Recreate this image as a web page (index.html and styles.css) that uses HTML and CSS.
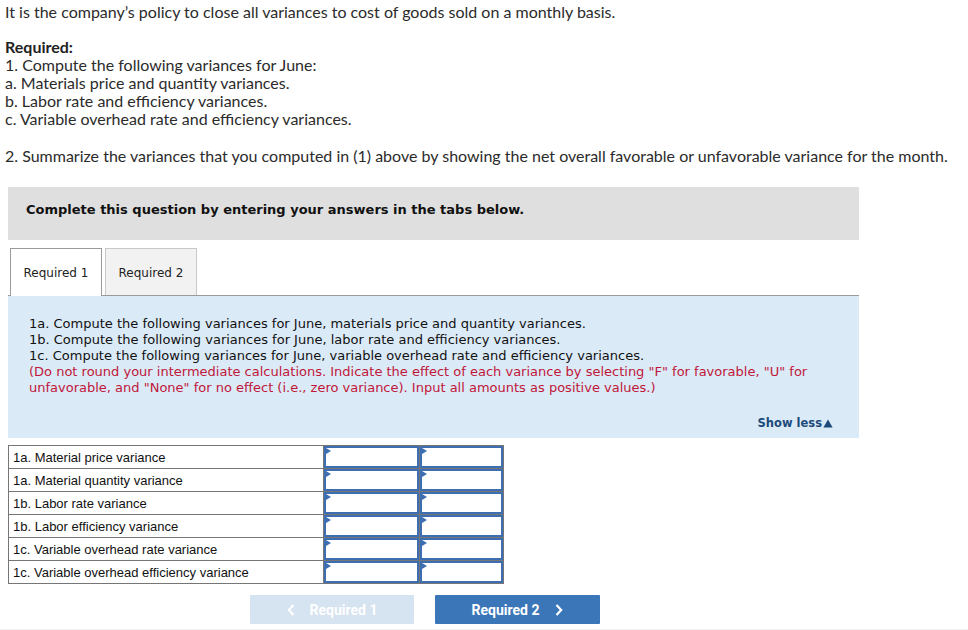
FILE: index.html
```html
<!DOCTYPE html>
<html>
<head>
<meta charset="utf-8">
<link rel="stylesheet" href="styles.css">
</head>
<body>
<div class="intro">
  <p class="line">It is the company’s policy to close all variances to cost of goods sold on a monthly basis.</p>
  <p class="req-head">Required:</p>
  <p class="line">1. Compute the following variances for June:</p>
  <p class="line">a. Materials price and quantity variances.</p>
  <p class="line">b. Labor rate and efficiency variances.</p>
  <p class="line">c. Variable overhead rate and efficiency variances.</p>
  <p class="line second">2. Summarize the variances that you computed in (1) above by showing the net overall favorable or unfavorable variance for the month.</p>
</div>
<div class="wrap">
  <div class="banner">Complete this question by entering your answers in the tabs below.</div>
  <div class="tabs">
    <div class="tab active">Required 1</div>
    <div class="tab">Required 2</div>
  </div>
  <div class="panel">
    <div class="ptext">
      <div>1a. Compute the following variances for June, materials price and quantity variances.</div>
      <div>1b. Compute the following variances for June, labor rate and efficiency variances.</div>
      <div>1c. Compute the following variances for June, variable overhead rate and efficiency variances.</div>
      <div class="red">(Do not round your intermediate calculations. Indicate the effect of each variance by selecting "F" for favorable, "U" for unfavorable, and "None" for no effect (i.e., zero variance). Input all amounts as positive values.)</div>
    </div>
    <div class="showless">Show less<svg class="tri" width="10" height="9" viewBox="0 0 10 9"><path d="M5 0.5 L9.6 8.5 L0.4 8.5 Z" fill="#1d4a7a"/></svg></div>
  </div>
  <table class="grid">
    <tr><td class="lbl">1a. Material price variance</td><td class="inp a"><span class="mk"></span></td><td class="inp b"><span class="mk"></span></td></tr>
    <tr><td class="lbl">1a. Material quantity variance</td><td class="inp a"><span class="mk"></span></td><td class="inp b"><span class="mk"></span></td></tr>
    <tr><td class="lbl">1b. Labor rate variance</td><td class="inp a"><span class="mk"></span></td><td class="inp b"><span class="mk"></span></td></tr>
    <tr><td class="lbl">1b. Labor efficiency variance</td><td class="inp a"><span class="mk"></span></td><td class="inp b"><span class="mk"></span></td></tr>
    <tr><td class="lbl">1c. Variable overhead rate variance</td><td class="inp a"><span class="mk"></span></td><td class="inp b"><span class="mk"></span></td></tr>
    <tr><td class="lbl">1c. Variable overhead efficiency variance</td><td class="inp a"><span class="mk"></span></td><td class="inp b"><span class="mk"></span></td></tr>
  </table>
  <div class="nav">
    <div class="btn prev"><svg class="chev" width="8" height="12" viewBox="0 0 8 12"><path d="M6.5 1 L1.8 6 L6.5 11" fill="none" stroke="#fff" stroke-width="2.2"/></svg>Required 1</div>
    <div class="btn next">Required 2<svg class="chev r" width="8" height="12" viewBox="0 0 8 12"><path d="M1.5 1 L6.2 6 L1.5 11" fill="none" stroke="#fff" stroke-width="2.2"/></svg></div>
  </div>
</div>
</body>
</html>
```
FILE: styles.css
```css
html, body { margin: 0; padding: 0; background: #fff; }
body { width: 968px; height: 630px; overflow: hidden; border-bottom: 1px solid #eee; box-sizing: border-box; }
.intro {
  padding: 3px 0 0 5px;
  font-family: "Lato", "Liberation Sans", sans-serif;
  font-size: 16px;
  line-height: 18px;
  color: #2b2b2b;
}
.intro p { margin: 0; }
.req-head { font-weight: bold; margin-top: 17px !important; color: #222; }
.second { margin-top: 19px !important; }
.wrap { margin: 22px 0 0 8px; width: 851px; }
.banner {
  background: #dfdfdf;
  height: 53px;
  box-sizing: border-box;
  padding: 15px 0 0 18px;
  font-family: "DejaVu Sans", Verdana, sans-serif;
  font-weight: bold;
  font-size: 13px;
  line-height: 16px;
  color: #111;
}
.tabs {
  margin-top: 8px;
  display: flex;
  gap: 3px;
  padding-left: 2px;
  border-bottom: 1px solid #9a9a9a;
  height: 47px;
}
.tab {
  width: 92px;
  height: 47px;
  box-sizing: border-box;
  border: 1px solid #c8c8c8;
  border-bottom: none;
  background: #f2f2f2;
  font-family: "DejaVu Sans", Verdana, sans-serif;
  font-size: 12px;
  color: #222;
  display: flex;
  align-items: center;
  justify-content: center;
  padding-top: 1px;
}
.tab.active {
  background: #fff;
  border-color: #9a9a9a;
  height: 48px;
  position: relative;
  z-index: 1;
}
.panel {
  background: #dbeaf7;
  height: 142px;
  box-sizing: border-box;
  padding: 20px 26px 0 21px;
  font-family: "DejaVu Sans", Verdana, sans-serif;
  font-size: 13px;
  line-height: 16px;
  color: #111;
}
.red { color: #c0173a; }
.showless {
  display: flex;
  justify-content: flex-end;
  align-items: center;
  gap: 1px;
  margin-top: 19px;
  font-weight: bold;
  font-size: 11.5px;
  color: #1d4a7a;
}
.grid {
  margin-top: 7px;
  border-collapse: collapse;
  font-family: "Liberation Sans", Arial, sans-serif;
  font-size: 13px;
  color: #111;
}
.grid td { border: 1px solid #767676; height: 23px; padding: 0; box-sizing: border-box; }
.lbl { width: 315px; padding-left: 4px !important; box-sizing: border-box; }
.inp { position: relative; box-shadow: inset 0 0 0 2px #3c6eb1; }
.inp.a { width: 96px; }
.inp.b { width: 84px; }
.mk {
  position: absolute;
  left: 2px;
  top: 2px;
  width: 0;
  height: 0;
  border-top: 3px solid transparent;
  border-bottom: 3px solid transparent;
  border-left: 5px solid #3c6eb1;
}
.nav {
  display: flex;
  gap: 21px;
  padding-left: 242px;
  margin-top: 11px;
}
.btn {
  width: 165px;
  height: 29px;
  display: flex;
  align-items: center;
  justify-content: center;
  font-family: "Roboto", "Liberation Sans", sans-serif;
  font-weight: bold;
  font-size: 14px;
  color: #fff;
  border-radius: 1px;
}
.btn.prev { background: #d6e3f1; width: 164px; }
.btn.next { background: #3b76b8; }
.chev { margin-right: 15px; }
.chev.r { margin-right: 0; margin-left: 16px; }
```
